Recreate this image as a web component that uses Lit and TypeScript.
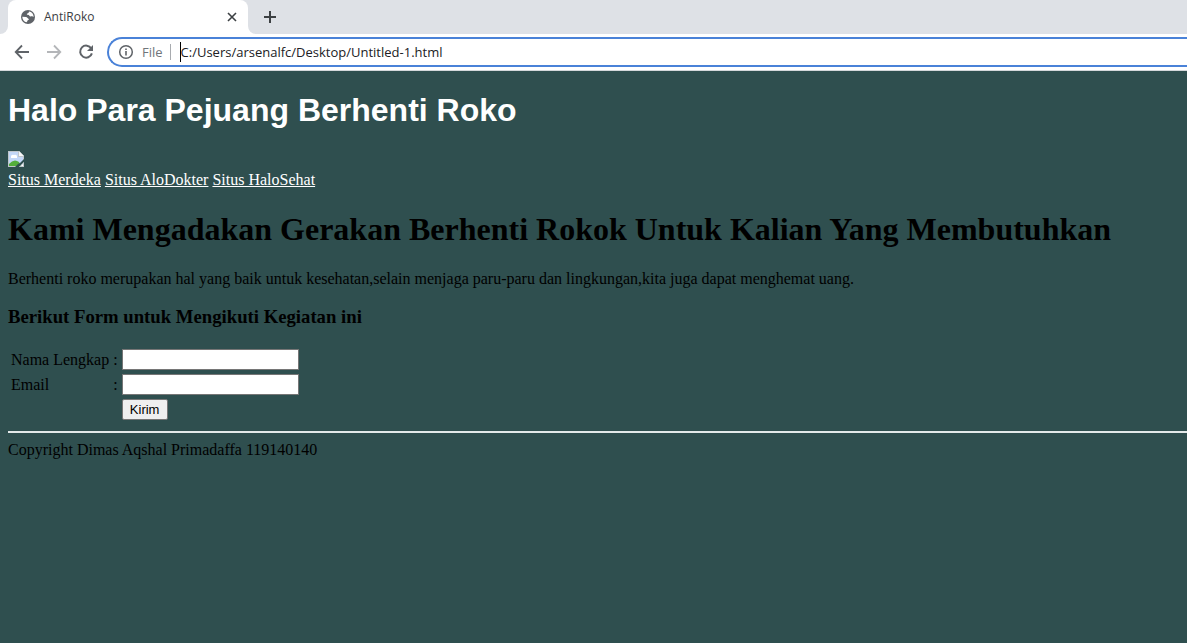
import { LitElement, html, css } from "lit";
import { customElement, state } from "lit/decorators.js";

const links = ["Situs Merdeka", "Situs AloDokter", "Situs HaloSehat"];

@customElement("browser-bar")
class BrowserBar extends LitElement {
  @state() private address = "C:/Users/arsenalfc/Desktop/Untitled-1.html";

  static styles = css`
    :host {
      display: block;
      font-family: "Open Sans", "Noto Sans", sans-serif;
      color: #3c4043;
      background: #fff;
      border-bottom: 1px solid #d5d8db;
    }
    * { box-sizing: border-box; }
    button {
      display: grid;
      place-items: center;
      padding: 0;
      border: 0;
      background: none;
      color: #5f6368;
    }
    svg { display: block; }
    .strip {
      display: flex;
      align-items: stretch;
      height: 34px;
      background: #fff;
    }
    .edge {
      width: 8px;
      background: #dee1e6;
      border-bottom-right-radius: 8px;
    }
    .corner { background: #dee1e6; }
    .tab {
      flex: 0 1 240px;
      display: flex;
      align-items: center;
      gap: 8px;
      padding: 0 8px 0 12px;
      background: linear-gradient(#dee1e6 50%, #fff 50%);
      position: relative;
      isolation: isolate;
    }
    .tab::before {
      content: "";
      position: absolute;
      inset: 0;
      z-index: -1;
      background: #fff;
      border-radius: 8px 8px 0 0;
    }
    .tab-title { flex: 1; font-size: 12px; line-height: 16px; }
    .close { width: 16px; height: 16px; color: #3c4043; }
    .rest {
      flex: 1;
      display: flex;
      align-items: center;
      padding-left: 8px;
      background: #dee1e6;
      border-bottom-left-radius: 8px;
    }
    .new { width: 28px; height: 28px; color: #3c4043; }
    .toolbar {
      display: flex;
      align-items: center;
      padding: 3px 0 3px 6px;
    }
    .tool { width: 32px; height: 30px; }
    .forward { color: #b4b6b9; }
    .omnibox {
      flex: 1;
      display: flex;
      align-items: center;
      height: 30px;
      margin-left: 5px;
      padding-left: 9px;
      border: 2px solid #4a82d8;
      border-right: 0;
      border-radius: 15px 0 0 15px;
      color: #5f6368;
      font-size: 13px;
    }
    .scheme { margin-left: 8px; color: #70757a; line-height: 18px; }
    .divider { width: 1px; height: 16px; margin: 0 9px 0 7px; background: #a8abaf; }
    .caret { width: 1px; height: 20px; background: #000; }
    .address {
      flex: 1;
      min-width: 0;
      padding: 0;
      border: 0;
      outline: 0;
      background: none;
      color: #202124;
      font: inherit;
    }
  `;

  render() {
    return html`
      <div class="corner">
        <div class="strip">
          <div class="edge"></div>
          <div class="tab">
            <svg width="16" height="16" viewBox="0 0 16 16" aria-hidden="true">
              <circle cx="8" cy="8" r="7" fill="#5f6368" />
              <path fill="#fff" d="M2.3 7.7 6 8.1c1.2.1 1.5 1.3 2.4 1.6.8.3.4 1.2-.3 1.4-.8.2-.5 1.4-1.5 2.2C4.2 13 2.3 10.6 2.3 7.7ZM9 2.4c-.5 1-.1 1.500-1 1.800-.8.3-1.5.5-1 1.200.5.8 1.700.1 2.200 1 .5 1 1.300 1.200 2.400.9.9-.2 1.300.5 2 .6C13.700 5 11.800 2.800 9 2.400Z" />
            </svg>
            <span class="tab-title">AntiRoko</span>
            <button class="close" aria-label="Tutup tab">
              <svg width="10" height="10" viewBox="0 0 10 10"><path d="M1 1l8 8M9 1l-8 8" stroke="currentColor" stroke-width="1.6" /></svg>
            </button>
          </div>
          <div class="rest">
            <button class="new" aria-label="Tab baru">
              <svg width="14" height="14" viewBox="0 0 14 14"><path d="M7 1v12M1 7h12" stroke="currentColor" stroke-width="2" /></svg>
            </button>
          </div>
        </div>
      </div>
      <div class="toolbar">
        <button class="tool" aria-label="Kembali">
          <svg width="16" height="16" viewBox="0 0 16 16"><path d="M15 8H2M8 1.500 1.700 8 8 14.500" fill="none" stroke="currentColor" stroke-width="1.800" /></svg>
        </button>
        <button class="tool forward" aria-label="Maju">
          <svg width="16" height="16" viewBox="0 0 16 16"><path d="M1 8h13M8 1.500 14.300 8 8 14.500" fill="none" stroke="currentColor" stroke-width="1.800" /></svg>
        </button>
        <button class="tool" aria-label="Muat ulang">
          <svg width="16" height="16" viewBox="0 0 16 16">
            <path d="M13.300 4.500A6 6 0 1 0 13.900 9.400" fill="none" stroke="currentColor" stroke-width="2" />
            <path d="M15 1v6H9Z" fill="currentColor" />
          </svg>
        </button>
        <div class="omnibox">
          <svg width="16" height="16" viewBox="0 0 16 16" aria-hidden="true">
            <circle cx="8" cy="8" r="6.300" fill="none" stroke="currentColor" stroke-width="1.500" />
            <path d="M8 7v4.500M8 4.400v1.600" stroke="currentColor" stroke-width="1.600" />
          </svg>
          <span class="scheme">File</span>
          <span class="divider"></span>
          <span class="caret"></span>
          <input class="address" aria-label="Alamat" spellcheck="false" .value=${this.address}
            @input=${(e: Event) => (this.address = (e.target as HTMLInputElement).value)} />
        </div>
      </div>
    `;
  }
}

@customElement("app-root")
class AppRoot extends LitElement {
  static styles = css`
    :host {
      display: flex;
      flex-direction: column;
      min-height: 100vh;
      background: #2f4f4f;
      color: #000;
      font: 16px "Liberation Serif", "Times New Roman", serif;
    }
    main { padding: 21px 0 8px 8px; }
    h1 { margin: 0 0 22px; font-size: 32px; line-height: 37px; }
    .hello { color: #fff; font-family: "Liberation Sans", Arial, sans-serif; }
    .picture { display: block; margin-bottom: 4px; }
    nav { margin-bottom: 22px; line-height: 18px; }
    a { color: #fff; }
    p { margin: 0 0 18px; line-height: 18px; }
    h3 { margin: 0 0 19px; line-height: 21px; }
    table { border-spacing: 2px; }
    td { padding: 1px; line-height: 18px; }
    .field {
      display: block;
      box-sizing: border-box;
      width: 177px;
      height: 21px;
      padding: 1px 2px;
      border: 1px solid #767676;
      background: #fff;
      font: 13px "Liberation Sans", Arial, sans-serif;
    }
    .send {
      display: block;
      min-width: 46px;
      height: 21px;
      padding: 1px 7px;
      border: 1px solid #767676;
      border-radius: 2px;
      background: #efefef;
      color: #000;
      font: 13px "Liberation Sans", Arial, sans-serif;
    }
    hr {
      margin: 8px 0;
      border: 0;
      height: 2px;
      background: #e4eaea;
    }
    footer { line-height: 18px; }
  `;

  render() {
    return html`
      <browser-bar></browser-bar>
      <main>
        <h1 class="hello">Halo Para Pejuang Berhenti Roko</h1>
        <svg class="picture" width="16" height="16" viewBox="0 0 16 16" aria-hidden="true">
          <path d="M0 0h11l5 5v11H0Z" fill="#c0c6cb" />
          <path d="M1 1h9v5h5v9H1Z" fill="#c3d7f7" />
          <path d="M3 6a2 2 0 0 1 3-2 2 2 0 0 1 3 2v1H3Z" fill="#fff" />
          <path d="M1 15v-2q5-6 10-2l2 4Z" fill="#54ae3c" />
          <path d="M11 0v5h5Z" fill="#f5f6f7" />
          <path d="M16 8v3l-5 5H7l3-3 2-1Z" fill="#2f4f4f" />
          <path d="M16 11v5h-5Z" fill="#c0c6cb" />
          <path d="M15 13v2h-2Z" fill="#fff" />
        </svg>
        <nav>${links.map((name) => html`<a href="#">${name}</a> `)}</nav>
        <h1>Kami Mengadakan Gerakan Berhenti Rokok Untuk Kalian Yang Membutuhkan</h1>
        <p>Berhenti roko merupakan hal yang baik untuk kesehatan,selain menjaga paru-paru dan lingkungan,kita juga dapat menghemat uang.</p>
        <h3>Berikut Form untuk Mengikuti Kegiatan ini</h3>
        <form @submit=${(e: Event) => e.preventDefault()}>
          <table>
            <tr>
              <td><label for="nama">Nama Lengkap</label></td>
              <td>:</td>
              <td><input class="field" id="nama" type="text" /></td>
            </tr>
            <tr>
              <td><label for="email">Email</label></td>
              <td>:</td>
              <td><input class="field" id="email" type="text" /></td>
            </tr>
            <tr>
              <td></td>
              <td></td>
              <td><button class="send" type="submit">Kirim</button></td>
            </tr>
          </table>
        </form>
        <hr />
        <footer>Copyright Dimas Aqshal Primadaffa 119140140</footer>
      </main>
    `;
  }
}
